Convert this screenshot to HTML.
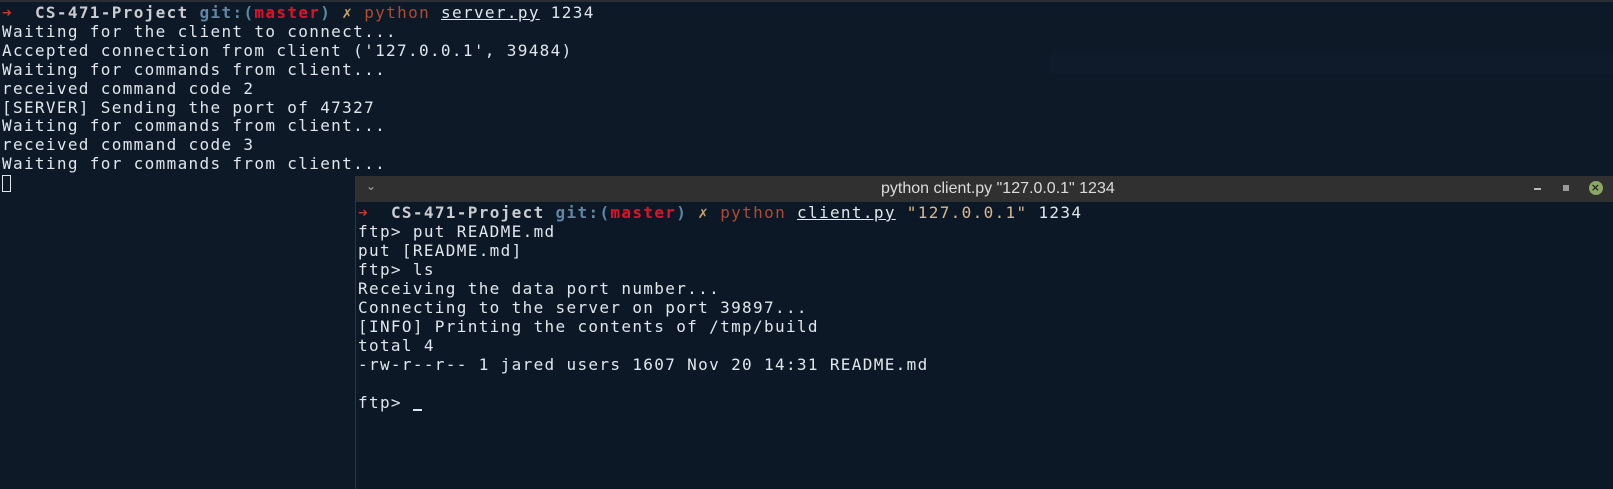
<!DOCTYPE html>
<html><head><meta charset="utf-8"><style>
html,body{margin:0;padding:0;width:1613px;height:489px;overflow:hidden;background:#0e1927;}
body{position:relative;font-family:"DejaVu Sans Mono","Liberation Mono",monospace;font-size:16px;letter-spacing:1.34px;color:#dfe6ec;}
.top{position:absolute;left:0;top:0;width:1613px;height:2px;background:#2a2d31;}
pre{margin:0;font:inherit;white-space:pre;position:absolute;}
#srv{left:2px;top:4px;line-height:18.9px;}
#cli{left:358px;top:203px;line-height:19.05px;}
.win{position:absolute;left:355px;top:176px;width:1258px;height:313px;background:#0d1826;border-left:1px solid #2d3640;}
.tb{position:absolute;left:0;top:0;width:1258px;height:26px;background:#303030;}
.title{position:absolute;left:525px;top:4px;font-family:"Liberation Sans",sans-serif;font-size:16px;color:#dcdcdc;letter-spacing:0}
.ar{color:#c0392b}.b{font-weight:bold;color:#c9ccd0}.g{color:#5e87a3;font-weight:bold}.r{color:#e0102a;font-weight:bold}.x{color:#c9a46b}.py{color:#b04a30}.u{text-decoration:underline}.s{color:#d9b88f}
.cur{display:inline-block;width:9px;height:17px;border:1px solid #dfe6ec;vertical-align:-4px;box-sizing:border-box}
.ucur{display:inline-block;width:9px;height:2px;background:#dfe6ec;vertical-align:-3px}
.hdr{position:absolute;left:1050px;top:52px;width:563px;height:22px;background:#0f1b2b;}
</style></head><body>
<div class="top"></div>
<div class="hdr"></div>
<pre id="srv"><span class="ar">➜</span>  <span class="b">CS-471-Project</span> <span class="g">git:(</span><span class="r">master</span><span class="g">)</span> <span class="x">✗</span> <span class="py">python</span> <span class="u">server.py</span> 1234
Waiting for the client to connect...
Accepted connection from client ('127.0.0.1', 39484)
Waiting for commands from client...
received command code 2
[SERVER] Sending the port of 47327
Waiting for commands from client...
received command code 3
Waiting for commands from client...
<span class="cur"></span></pre>
<div class="win">
<div class="tb"><span style="position:absolute;left:10px;top:3px;color:#aaa;font-size:12px;font-family:'DejaVu Sans',sans-serif">⌄</span>
<div class="title">python client.py "127.0.0.1" 1234</div>
<div style="position:absolute;left:1178px;top:12px;width:7px;height:2px;background:#bbb"></div>
<div style="position:absolute;left:1207px;top:9px;width:6px;height:6px;background:#999"></div>
<div style="position:absolute;left:1233px;top:5px;width:14px;height:14px;border-radius:50%;background:#8aa864;color:#222;font-size:11px;line-height:14px;text-align:center;font-family:'DejaVu Sans',sans-serif;font-weight:bold">×</div>
</div>
</div>
<pre id="cli"><span class="ar">➜</span>  <span class="b">CS-471-Project</span> <span class="g">git:(</span><span class="r">master</span><span class="g">)</span> <span class="x">✗</span> <span class="py">python</span> <span class="u">client.py</span> <span class="s">"127.0.0.1"</span> 1234
ftp&gt; put README.md
put [README.md]
ftp&gt; ls
Receiving the data port number...
Connecting to the server on port 39897...
[INFO] Printing the contents of /tmp/build
total 4
-rw-r--r-- 1 jared users 1607 Nov 20 14:31 README.md

ftp&gt; <span class="ucur"></span></pre>
</body></html>
